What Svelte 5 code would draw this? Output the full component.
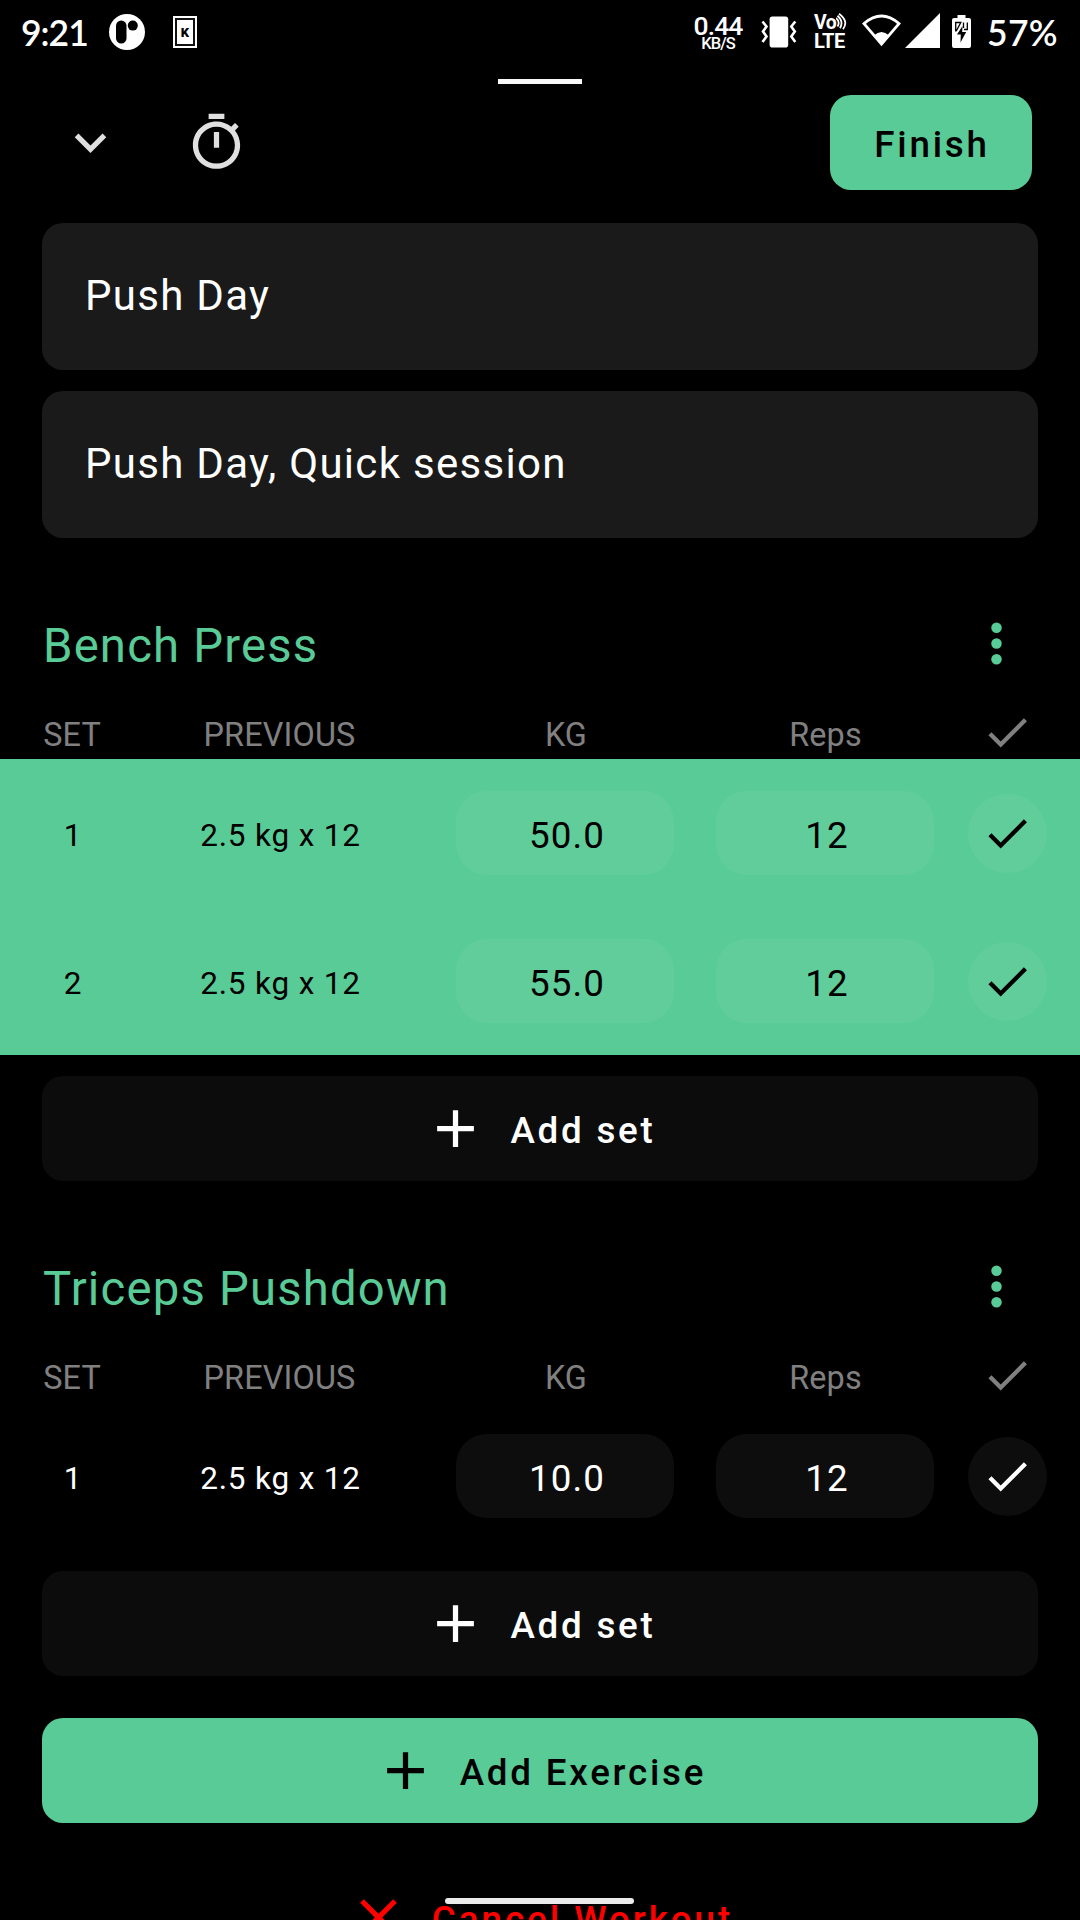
<script>
  const exercises = [
    {
      name: 'Bench Press',
      sets: [
        { n: 1, previous: '2.5 kg x 12', kg: '50.0', reps: '12', done: true },
        { n: 2, previous: '2.5 kg x 12', kg: '55.0', reps: '12', done: true },
      ],
    },
    {
      name: 'Triceps Pushdown',
      sets: [{ n: 1, previous: '2.5 kg x 12', kg: '10.0', reps: '12', done: false }],
    },
  ];
</script>

{#snippet check()}
  <svg class="check" viewBox="0 0 24 24"><path d="M9 16.2L4.8 12l-1.4 1.4L9 19 21 7l-1.4-1.4L9 16.2z" /></svg>
{/snippet}

{#snippet plus()}
  <svg class="icon" viewBox="0 0 24 24"><path d="M19 13h-6v6h-2v-6H5v-2h6V5h2v6h6v2z" /></svg>
{/snippet}

<div class="screen">
  <header class="status">
    <span class="clock">9:21</span>
    <svg class="app" viewBox="0 0 36 36">
      <circle cx="18" cy="18" r="18" fill="#fff" />
      <rect x="7" y="6.5" width="10.5" height="23" rx="5.2" fill="#000" />
      <circle cx="23.8" cy="11.6" r="5" fill="#000" />
    </svg>
    <span class="kbox"><span class="kinner">K</span></span>
    <span class="spacer"></span>
    <span class="speed"><span class="rate">0.44</span><span class="unit">KB/S</span></span>
    <svg class="vibrate" viewBox="0 0 36 32">
      <rect x="8.6" y="0.4" width="18.6" height="31.2" rx="2.8" fill="#fff" />
      <path d="M1.500 5.500L5.500 10.500 2 15.500 5.500 20.500 1.500 26M34.300 5.500L30.300 10.500 33.800 15.500 30.300 20.500 34.300 26" fill="none" stroke="#fff" stroke-width="2.600" />
    </svg>
    <span class="volte">
      <span class="vo">Vo</span><span class="lte">LTE</span>
      <svg class="waves" viewBox="0 0 12 18">
        <path d="M0 5Q4.500 9 1.500 13.500M1.500 2.800Q8 8.500 4 15.200M3 .8Q13 8 7 16.200" fill="none" stroke="#fff" stroke-width="1.800" />
      </svg>
    </span>
    <svg class="wifi" viewBox="0 0 39 33">
      <path d="M2 9.600Q19.500-5.500 37 9.600L19.500 30.200z" fill="none" stroke="#fff" stroke-width="2.800" />
      <path d="M11.800 21.500Q19.500 14.500 27.200 21.500L19.500 31z" fill="#fff" />
    </svg>
    <svg class="signal" viewBox="0 0 35 35"><path d="M35 0v35H0z" fill="#fff" /></svg>
    <svg class="battery" viewBox="0 0 19 33">
      <path d="M5.500 0h8v3H17a2 2 0 0 1 2 2v26a2 2 0 0 1-2 2H2a2 2 0 0 1-2-2V5a2 2 0 0 1 2-2h3.500z" fill="#fff" />
      <path d="M10.500 11L5 19.500h3.800L8.500 27.500l5.700-10.500h-4z" fill="#000" />
      <path d="M3.700 16.500V7.500H8.800L4.300 16M11.500 7.500V13M15.300 7.500V14.500H12" fill="none" stroke="#000" stroke-width="1.300" />
    </svg>
    <span class="percent">57%</span>
  </header>

  <div class="handle"></div>

  <div class="toolbar">
    <svg class="icon" viewBox="0 0 24 24"><path d="M16.590 8.590L12 13.170 7.410 8.590 6 10l6 6 6-6z" /></svg>
    <svg class="icon timer" viewBox="0 0 24 24">
      <path d="M15 1H9v2h6V1zm-4 13h2V8h-2v6zm8.030-6.610l1.420-1.420c-.43-.51-.9-.99-1.410-1.410l-1.420 1.420C16.070 4.740 14.120 4 12 4c-4.970 0-9 4.030-9 9s4.020 9 9 9 9-4.030 9-9c0-2.120-.74-4.070-1.970-5.610zM12 20c-3.870 0-7-3.130-7-7s3.130-7 7-7 7 3.130 7 7-3.130 7-7 7z" />
    </svg>
    <button class="finish">Finish</button>
  </div>

  <div class="fields">
    <div class="field">Push Day</div>
    <div class="field">Push Day, Quick session</div>
  </div>

  {#each exercises as ex}
    <section>
      <div class="title">
        <h2>{ex.name}</h2>
        <svg class="icon" viewBox="0 0 24 24">
          <circle cx="12" cy="6" r="2" /><circle cx="12" cy="12" r="2" /><circle cx="12" cy="18" r="2" />
        </svg>
      </div>
      <div class="row labels">
        <span>SET</span><span>PREVIOUS</span><span>KG</span><span>Reps</span>{@render check()}
      </div>
      {#each ex.sets as s}
        <div class="row set" class:done={s.done}>
          <span class="cell number">{s.n}</span>
          <span class="cell">{s.previous}</span>
          <span class="pill">{s.kg}</span>
          <span class="pill">{s.reps}</span>
          <span class="round">{@render check()}</span>
        </div>
      {/each}
      <button class="wide">{@render plus()}<span>Add set</span></button>
    </section>
  {/each}

  <button class="wide primary">{@render plus()}<span>Add Exercise</span></button>
  <button class="wide cancel">
    <svg class="icon" viewBox="0 0 24 24"><path d="M19 6.410L17.590 5 12 10.590 6.410 5 5 6.410 10.590 12 5 17.590 6.410 19 12 13.410 17.590 19 19 17.590 13.410 12z" /></svg>
    <span>Cancel Workout</span>
  </button>

  <div class="navbar"></div>
</div>

<style>
  :global(body) { background: #000; }
  .screen {
    --green: #59cb96;
    position: relative;
    width: 1080px;
    height: 1920px;
    overflow: hidden;
    background: #000;
    color: #fff;
    font-family: Roboto, sans-serif;
    display: flex;
    flex-direction: column;
  }
  .screen > * { flex-shrink: 0; box-sizing: border-box; }
  svg { display: block; flex: none; }
  button { border: 0; margin: 0; font-family: inherit; }

  .status {
    height: 79px;
    padding: 13px 0 0 21px;
    display: flex;
    align-items: flex-start;
  }
  .spacer { flex: 1; }
  .clock, .percent {
    font-family: Lato, sans-serif;
    font-weight: 600;
    font-size: 35.500px;
    line-height: 40px;
    white-space: nowrap;
  }
  .clock { width: 88px; letter-spacing: -1px; }
  .percent { width: 93px; letter-spacing: 0.300px; }
  .app { width: 36px; height: 36px; margin-top: 1px; }
  .kbox {
    box-sizing: border-box;
    width: 24px;
    height: 32px;
    margin: 3px 0 0 28px;
    padding: 2px;
    background: #fff;
  }
  .kinner {
    box-sizing: border-box;
    display: block;
    height: 28px;
    border: 2px solid #111;
    color: #000;
    font-size: 13px;
    font-weight: 900;
    line-height: 25px;
    text-align: center;
  }
  .speed {
    width: 52px;
    margin-right: 17px;
    display: flex;
    flex-direction: column;
    align-items: center;
    font-weight: 500;
  }
  .rate { font-size: 26.500px; line-height: 25px; letter-spacing: -0.900px; }
  .unit { font-size: 16.500px; line-height: 14px; letter-spacing: -0.900px; margin-top: -1px; }
  .vibrate { width: 36px; height: 32px; margin: 3px 17px 0 0; }
  .volte {
    position: relative;
    width: 34px;
    height: 36px;
    margin-right: 14px;
    font-weight: 700;
    display: flex;
    flex-direction: column;
  }
  .vo { font-size: 19.500px; line-height: 20px; letter-spacing: -0.500px; }
  .lte { font-size: 20px; line-height: 17px; letter-spacing: -0.500px; }
  .waves { position: absolute; left: 22px; top: 0; width: 12px; height: 18px; }
  .wifi { width: 39px; height: 33px; margin: 1px 4px 0 0; }
  .signal { width: 35px; height: 35px; margin-right: 12px; }
  .battery { width: 19px; height: 33px; margin: 2px 16px 0 0; }

  .handle { width: 84px; height: 5px; margin: 0 auto; background: #f8f8f8; }

  .toolbar {
    height: 139px;
    padding: 11px 48px 0 59px;
    display: flex;
    align-items: flex-start;
    color: #e0e0e0;
  }
  .icon { width: 63px; height: 63px; fill: currentColor; }
  .toolbar .icon { margin-top: 16px; }
  .toolbar .timer { margin-left: 63px; }
  .finish {
    margin-left: auto;
    width: 202px;
    height: 95px;
    padding: 4px 0 0 2px;
    border-radius: 21px;
    background: var(--green);
    color: #000;
    font-size: 36.750px;
    font-weight: 500;
    letter-spacing: 2.770px;
  }

  .fields { padding: 0 42px; display: flex; flex-direction: column; gap: 21px; }
  .field {
    height: 147px;
    padding-left: 43px;
    border-radius: 21px;
    background: #1a1a1a;
    font-size: 42px;
    line-height: 145px;
    letter-spacing: 1.290px;
    white-space: pre;
  }

  section { padding-top: 63px; }
  .title {
    height: 84px;
    padding: 0 52px 0 43px;
    display: flex;
    align-items: center;
    justify-content: space-between;
    color: var(--green);
  }
  h2 { margin: 6px 0 0; font-size: 47.250px; font-weight: 400; letter-spacing: 1.190px; }

  .row {
    display: grid;
    grid-template-columns: 143px 275px 294px 226px 139px;
    justify-items: center;
    align-items: center;
    font-size: 31.500px;
  }
  .labels { height: 53px; margin-top: 21px; color: #808080; }
  .labels span { margin-top: 4px; font-size: 32.400px; letter-spacing: 0.150px; padding-left: 1px; }
  .labels span:nth-child(2) { padding: 0 2px 0 0; }
  .labels span:nth-child(3) { padding-left: 2px; }
  .check { width: 52.500px; height: 52.500px; fill: currentColor; }
  .set { height: 148px; }
  .set.done { background: var(--green); color: #000; }
  .cell { letter-spacing: 0.830px; padding-top: 5px; }
  .number { padding-left: 3px; }
  .pill {
    box-sizing: border-box;
    width: 218px;
    height: 84px;
    padding: 3px 0 0 4px;
    border-radius: 31px;
    background: rgba(255, 255, 255, 0.05);
    font-size: 36.750px;
    line-height: 84px;
    letter-spacing: 1.050px;
    text-align: center;
  }
  .round {
    width: 79px;
    height: 79px;
    border-radius: 50%;
    background: rgba(255, 255, 255, 0.05);
    display: grid;
    place-items: center;
  }
  .round .check { margin-top: 1px; }

  .wide {
    width: 996px;
    height: 105px;
    margin: 21px 42px 0;
    padding: 0;
    border-radius: 21px;
    background: #0c0c0c;
    color: #fff;
    display: flex;
    align-items: center;
    justify-content: center;
    gap: 23px;
    font-size: 36.750px;
    font-weight: 500;
    letter-spacing: 2.770px;
  }
  .wide span { padding-top: 4px; }
  .primary { margin-top: 42px; background: var(--green); color: #000; }
  .cancel { margin-top: 42px; background: none; color: #f00; letter-spacing: 2.950px; gap: 22px; }

  .navbar {
    position: absolute;
    left: 445px;
    top: 1898px;
    width: 189px;
    height: 6px;
    border-radius: 3px;
    background: #ebebeb;
  }
</style>
